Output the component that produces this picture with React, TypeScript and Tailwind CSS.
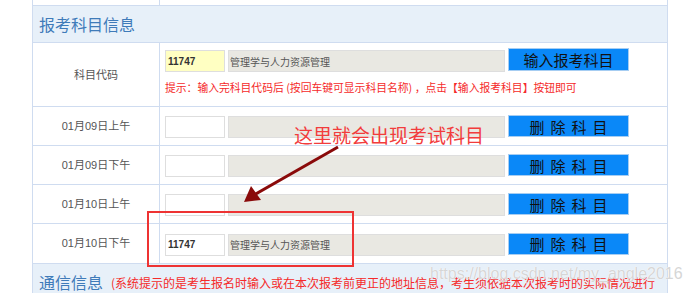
import React from 'react';

// 报考科目信息 — 科目录入表格（带标注截图）

const cjk = { fontFamily: '"Noto Sans CJK SC", "Liberation Sans", sans-serif' };
const latin = { fontFamily: '"Liberation Sans", "Noto Sans CJK SC", sans-serif' };

const slots = ['01月09日上午', '01月09日下午', '01月10日上午', '01月10日下午'];

function DeleteButton() {
  return (
    <div className="w-[121px] h-[22px] bg-[#0a88f8] border border-[#a6cdf2] flex items-center justify-center text-[15px] leading-none text-[#111] tracking-[6px] pl-[6px]">
      删除科目
    </div>
  );
}

export default function App() {
  return (
    <div className="relative w-[692px] h-[293px] bg-white overflow-hidden" style={cjk}>
      <div className="ml-[32px] w-[636px] border-x border-[#cfdcf0]">
        {/* 上一行残留 */}
        <div className="h-[6px] flex border-b border-[#cfdcf0]">
          <div className="w-[127px] border-r border-[#cfdcf0]" />
        </div>

        {/* 标题 */}
        <div className="h-[37px] bg-[#e7f0f9] border-b border-[#cfdcf0] flex items-center pl-[6px]">
          <span className="text-[16px] text-[#3f7bb9] leading-none">报考科目信息</span>
        </div>

        {/* 科目代码 */}
        <div className="h-[64px] flex border-b border-[#cfdcf0]">
          <div className="w-[127px] border-r border-[#cfdcf0] flex items-center justify-center text-[11px] text-[#555]">
            科目代码
          </div>
          <div className="flex-1 pl-[5px] pt-[5px]">
            <div className="flex items-start">
              <div className="mt-[2px] w-[60px] h-[22px] bg-[#ffffc2] border border-[#dedede] flex items-center pl-[2px] text-[10px] font-bold text-[#333]" style={latin}>
                11747
              </div>
              <div className="mt-[2px] ml-[3px] w-[277px] h-[22px] bg-[#e9e8e2] border border-[#dedede] flex items-center pl-[1px] text-[10px] text-[#555]">
                管理学与人力资源管理
              </div>
              <div className="ml-[3px] w-[121px] h-[23px] bg-[#0a88f8] border border-[#a6cdf2] flex items-center justify-center text-[15px] leading-none text-[#111]">
                输入报考科目
              </div>
            </div>
            <div className="mt-[8px] text-[10.8px] leading-[14px] text-[#f52a2a] whitespace-nowrap">
              提示：输入完科目代码后 (按回车键可显示科目名称) ，点击【输入报考科目】按钮即可
            </div>
          </div>
        </div>

        {/* 考试时段 */}
        {slots.map((label, i) => {
          const last = i === slots.length - 1;
          return (
            <div key={label} className={`${last ? 'h-[40px]' : 'h-[39px]'} flex border-b border-[#cfdcf0]`}>
              <div className="w-[127px] border-r border-[#cfdcf0] flex items-center justify-center text-[11px] text-[#555]" style={latin}>
                {label}
              </div>
              <div className="flex-1 pl-[5px] flex items-center">
                <div className="mt-[2px] w-[60px] h-[22px] bg-white border border-[#dedede] flex items-center pl-[2px] text-[10px] font-bold text-[#333]" style={latin}>
                  {last ? '11747' : ''}
                </div>
                <div className="mt-[2px] ml-[3px] w-[277px] h-[22px] bg-[#e9e8e2] border border-[#dedede] flex items-center pl-[1px] text-[10px] text-[#555]">
                  {last ? '管理学与人力资源管理' : ''}
                </div>
                <div className="ml-[3px]">
                  <DeleteButton />
                </div>
              </div>
            </div>
          );
        })}

        {/* 通信信息 */}
        <div className="h-[29px] bg-[#e7f0f9] flex items-start pl-[6px] pt-[8px] whitespace-nowrap">
          <span className="text-[16px] leading-[20px] text-[#3f7bb9]">通信信息</span>
          <span className="ml-[8px] mt-[1px] text-[12px] leading-[20px] text-[#f52a2a]">
            (系统提示的是考生报名时输入或在本次报考前更正的地址信息，考生须依据本次报考时的实际情况进行
          </span>
        </div>
      </div>

      {/* 标注：红框 */}
      <div className="absolute left-[147px] top-[211px] w-[207px] h-[56px] border-2 border-[#ee3333]" />

      {/* 标注：说明文字 */}
      <div className="absolute left-[294px] top-[123px] text-[19px] leading-[24px] text-[#f23c3c] whitespace-nowrap">
        这里就会出现考试科目
      </div>

      {/* 标注：箭头 */}
      <svg className="absolute left-0 top-0" width="692" height="293">
        <line x1="338" y1="147" x2="254" y2="195" stroke="#8a0a0a" strokeWidth="3" />
        <polygon points="244,202 251,186 261,200" fill="#8a0a0a" />
      </svg>

      {/* 水印 */}
      <div
        className="absolute left-[430px] top-[264px] text-[16px] leading-[20px] text-[#d6d6d6] whitespace-nowrap"
        style={{ fontFamily: '"Liberation Sans", sans-serif', textShadow: '0 0 1px #fff, 0 0 1px #fff' }}
      >
        https://blog.csdn.net/my_angle2016
      </div>
    </div>
  );
}
